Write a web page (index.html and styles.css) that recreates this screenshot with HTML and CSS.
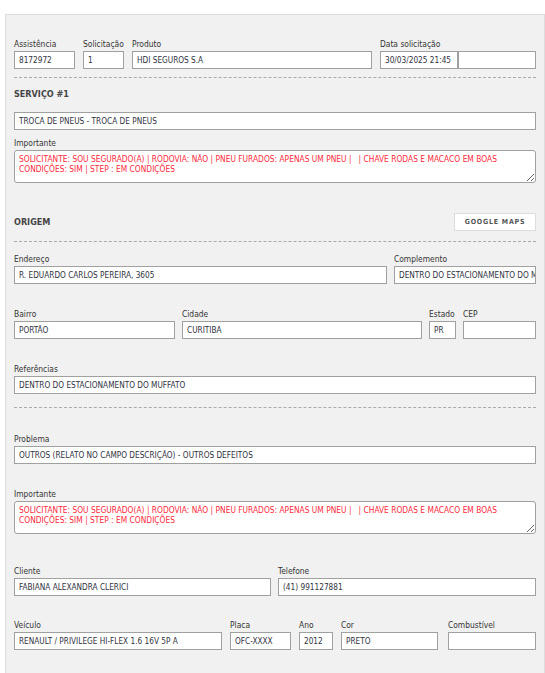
FILE: index.html
```html
<!DOCTYPE html>
<html lang="pt-BR">
<head>
<meta charset="utf-8">
<title>Serviço</title>
<link rel="stylesheet" href="styles.css">
</head>
<body>
<div class="panel">
  <div class="row row-first">
    <div class="field w-assist"><label>Assistência</label><input class="inp" value="8172972"></div>
    <div class="field w-solic"><label>Solicitação</label><input class="inp" value="1"></div>
    <div class="field w-prod"><label>Produto</label><input class="inp" value="HDI SEGUROS S.A"></div>
    <div class="field grow"><label>Data solicitação</label>
      <div class="pair"><input class="inp" value="30/03/2025 21:45"><input class="inp" value=""></div>
    </div>
  </div>
  <hr class="dash dash-1">
  <h3 class="title title-serv">SERVIÇO #1</h3>
  <div class="row row-serv">
    <div class="field grow"><input class="inp" value="TROCA DE PNEUS - TROCA DE PNEUS"></div>
  </div>
  <div class="row row-imp1">
    <div class="field grow"><label>Importante</label><textarea class="ta">SOLICITANTE: SOU SEGURADO(A) | RODOVIA: NÃO | PNEU FURADOS: APENAS UM PNEU |   | CHAVE RODAS E MACACO EM BOAS CONDIÇÕES: SIM | STEP : EM CONDIÇÕES</textarea></div>
  </div>
  <div class="head-row">
    <h3 class="title">ORIGEM</h3>
    <button class="btn" type="button">GOOGLE MAPS</button>
  </div>
  <hr class="dash dash-2">
  <div class="row row-end">
    <div class="field w-end"><label>Endereço</label><input class="inp" value="R. EDUARDO CARLOS PEREIRA, 3605"></div>
    <div class="field grow"><label>Complemento</label><input class="inp inp-tight" value="DENTRO DO ESTACIONAMENTO DO MUFFATO"></div>
  </div>
  <div class="row row-gap">
    <div class="field w-bairro"><label>Bairro</label><input class="inp" value="PORTÃO"></div>
    <div class="field w-cidade"><label>Cidade</label><input class="inp" value="CURITIBA"></div>
    <div class="field w-estado"><label>Estado</label><input class="inp" value="PR"></div>
    <div class="field grow"><label>CEP</label><input class="inp" value=""></div>
  </div>
  <div class="row row-gap">
    <div class="field grow"><label>Referências</label><input class="inp" value="DENTRO DO ESTACIONAMENTO DO MUFFATO"></div>
  </div>
  <hr class="dash dash-3">
  <div class="row row-prob">
    <div class="field grow"><label>Problema</label><input class="inp" value="OUTROS (RELATO NO CAMPO DESCRIÇÃO) - OUTROS DEFEITOS"></div>
  </div>
  <div class="row row-gap">
    <div class="field grow"><label>Importante</label><textarea class="ta">SOLICITANTE: SOU SEGURADO(A) | RODOVIA: NÃO | PNEU FURADOS: APENAS UM PNEU |   | CHAVE RODAS E MACACO EM BOAS CONDIÇÕES: SIM | STEP : EM CONDIÇÕES</textarea></div>
  </div>
  <div class="row row-cli">
    <div class="field w-cli"><label>Cliente</label><input class="inp" value="FABIANA ALEXANDRA CLERICI"></div>
    <div class="field grow"><label>Telefone</label><input class="inp" value="(41) 991127881"></div>
  </div>
  <div class="row row-veic">
    <div class="field w-veic"><label>Veículo</label><input class="inp" value="RENAULT / PRIVILEGE HI-FLEX 1.6 16V 5P A"></div>
    <div class="field w-placa"><label>Placa</label><input class="inp" value="OFC-XXXX"></div>
    <div class="field w-ano"><label>Ano</label><input class="inp" value="2012"></div>
    <div class="field w-cor"><label>Cor</label><input class="inp" value="PRETO"></div>
    <div class="field grow w-comb"><label>Combustível</label><input class="inp" value=""></div>
  </div>
</div>
</body>
</html>
```
FILE: styles.css
```css
html, body {
  margin: 0;
  padding: 0;
  background: #ffffff;
}
body {
  font-family: "DejaVu Sans Condensed", "DejaVu Sans", sans-serif;
  font-stretch: condensed;
  color: #333333;
}
.panel {
  margin: 14px 0 0 5px;
  width: 540px;
  box-sizing: border-box;
  min-height: 700px;
  background: #f1f1f1;
  border: 1px solid #dddddd;
  border-bottom: none;
  padding: 22px 8px 20px 8px;
  display: flex;
  flex-direction: column;
}
.row {
  display: flex;
  gap: 7px;
}
.row-first { gap: 8px; }
.field {
  display: flex;
  flex-direction: column;
  flex: none;
}
.field.grow { flex: 1; min-width: 0; }
.field label {
  display: block;
  font-size: 8.4px;
  line-height: 14px;
  margin-bottom: 0;
  color: #333333;
  white-space: nowrap;
}
.inp {
  display: block;
  box-sizing: border-box;
  width: 100%;
  height: 18px;
  margin: 0;
  padding: 0 4px;
  border: 1px solid #a0a0a0;
  border-radius: 0;
  background: #ffffff;
  font-family: inherit;
  font-stretch: condensed;
  font-size: 8.2px;
  color: #2f3340;
  outline: none;
}
.inp-tight { padding-right: 0; }
.pair { display: flex; }
.pair .inp { flex: 1; min-width: 0; }
.ta {
  display: block;
  box-sizing: border-box;
  width: 100%;
  height: 33px;
  margin: 0;
  padding: 3px 4px;
  border: 1px solid #a0a0a0;
  border-radius: 3px;
  background: #ffffff;
  font-family: inherit;
  font-stretch: condensed;
  font-size: 8.35px;
  line-height: 10px;
  color: #ff2a3c;
  resize: vertical;
  overflow: hidden;
}
.w-assist { width: 61px; }
.w-solic { width: 41px; }
.w-prod { width: 240px; }
.w-end { width: 373px; }
.w-bairro { width: 161px; }
.w-cidade { width: 240px; }
.w-estado { width: 27px; }
.w-cli { width: 257px; }
.w-veic { width: 208px; }
.w-placa { width: 61px; }
.w-ano { width: 34px; }
.w-cor { width: 97px; }
.w-comb { margin-left: 2px; }
.dash {
  width: 100%;
  height: 0;
  margin: 0;
  border: none;
  border-top: 1px dashed #aaaaaa;
}
.dash-1 { margin-top: 8px; }
.title {
  margin: 0;
  font-size: 9px;
  font-weight: bold;
  line-height: 14px;
  color: #444444;
}
.title-serv { margin-top: 9px; }
.row-serv { margin-top: 11px; }
.row-imp1 { margin-top: 6px; }
.head-row {
  margin-top: 30px;
  display: flex;
  justify-content: space-between;
  align-items: center;
}
.btn {
  box-sizing: border-box;
  width: 82px;
  height: 18px;
  margin: 0;
  padding: 0;
  background: #ffffff;
  border: 1px solid #dddddd;
  font-family: inherit;
  font-stretch: condensed;
  font-size: 7px;
  font-weight: bold;
  letter-spacing: 0.8px;
  color: #555555;
}
.dash-2 { margin-top: 10px; }
.row-end { margin-top: 10px; }
.row-gap { margin-top: 23px; }
.dash-3 { margin-top: 13px; }
.row-prob { margin-top: 24px; }
.row-cli { margin-top: 30px; }
.row-veic { margin-top: 22px; gap: 8px; }
```
